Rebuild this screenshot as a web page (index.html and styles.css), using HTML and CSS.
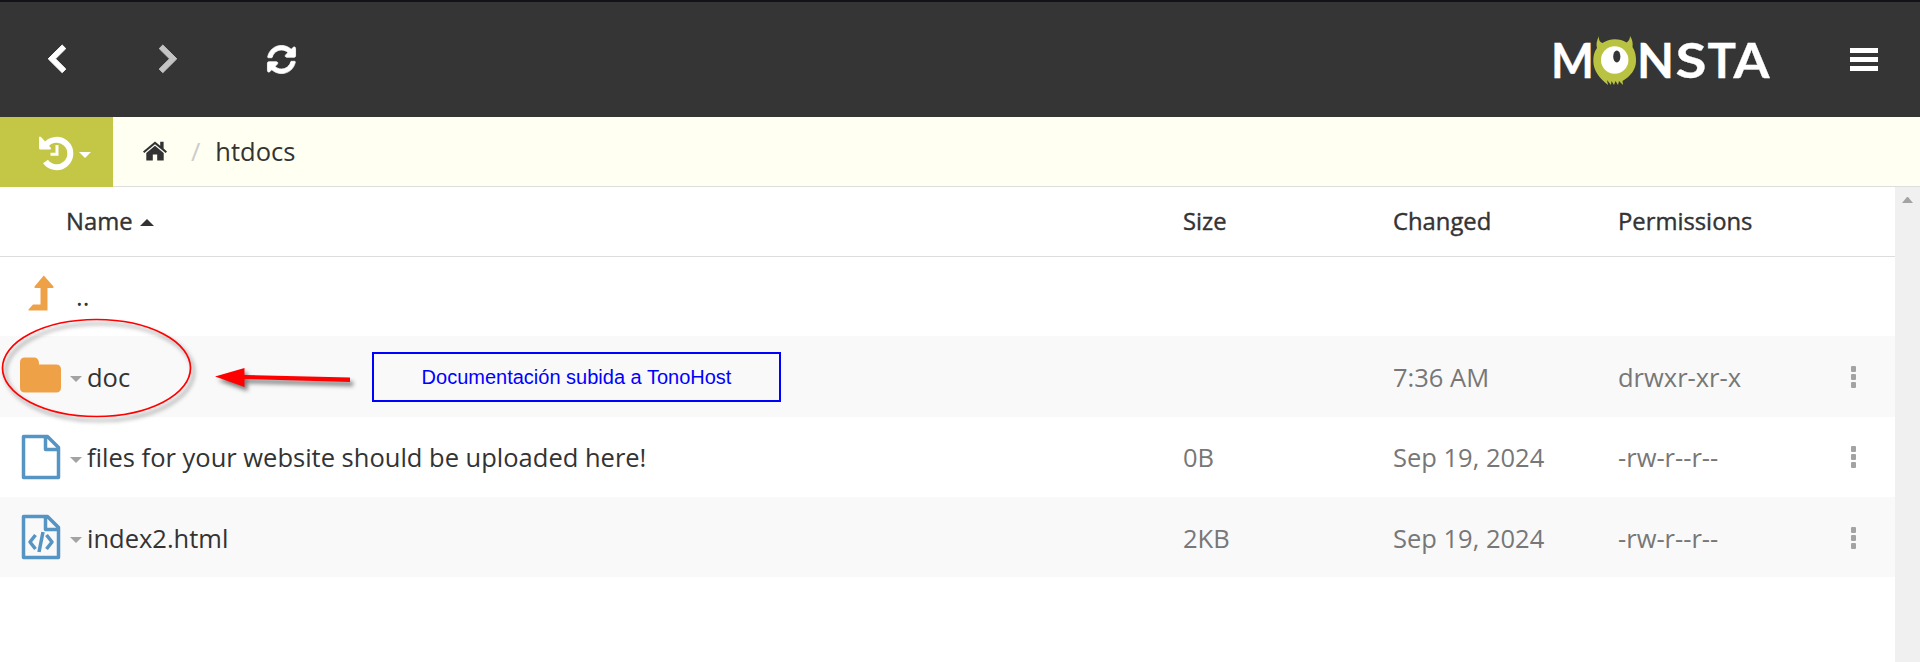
FILE: index.html
```html
<!DOCTYPE html>
<html lang="en">
<head>
<meta charset="utf-8">
<title>Monsta</title>
<link rel="stylesheet" href="styles.css">
</head>
<body>
<header class="topbar">
  <svg class="ic-back" viewBox="0 0 20 30"><path d="M15.2 1 18.8 4.6 8.500 14.8 18.8 25 15.2 28.7 1.2 14.8Z"/></svg>
  <svg class="ic-forward" viewBox="0 0 20 30"><path d="M4.8 1 1.2 4.6 11.5 14.8 1.2 25 4.8 28.7 18.8 14.8Z"/></svg>
  <svg class="ic-refresh" viewBox="0 0 512 512"><path d="M370.72 133.28C339.458 104.008 298.888 87.962 255.848 88c-77.458.068-144.328 53.178-162.791 126.85-1.344 5.363-6.122 9.15-11.651 9.15H24.103c-7.498 0-13.194-6.807-11.807-14.176C33.933 94.924 134.813 8 256 8c66.448 0 126.791 26.136 171.315 68.685L463.03 40.97C478.149 25.851 504 36.559 504 57.941V192c0 13.255-10.745 24-24 24H345.941c-21.382 0-32.09-25.851-16.971-40.971l41.75-41.749zM32 296h134.059c21.382 0 32.09 25.851 16.971 40.971l-41.75 41.75c31.262 29.273 71.835 45.319 114.876 45.28 77.418-.07 144.315-53.144 162.787-126.849 1.344-5.363 6.122-9.15 11.651-9.15h57.304c7.498 0 13.194 6.807 11.807 14.176C478.067 417.076 377.187 504 256 504c-66.448 0-126.791-26.136-171.315-68.685L48.97 471.03C33.851 486.149 8 475.441 8 454.059V320c0-13.255 10.745-24 24-24z"/></svg>
  <svg class="logo" viewBox="0 0 220 54">
    <g class="logo-text">
      <text x="-2" y="43" textLength="43" lengthAdjust="spacingAndGlyphs">M</text>
      <text x="84" y="43" textLength="37" lengthAdjust="spacingAndGlyphs">N</text>
      <text x="122.500" y="43" textLength="31" lengthAdjust="spacingAndGlyphs">S</text>
      <text x="154.500" y="43" textLength="28.500" lengthAdjust="spacingAndGlyphs">T</text>
      <text x="180.500" y="43" textLength="36" lengthAdjust="spacingAndGlyphs">A</text>
    </g>
    <path class="fur" d="M46 1C43.500 6 43 9 44 13C41 17 40.300 21 40.300 26C40.300 35 46 43 55 50L54 45L58 50L58.500 46L61 50L62.500 46L65 50L66 46L70 50L69.500 46C78 41 83 34 83 26C83 21 82.500 17 79.500 12C80 8 79.500 5 77 1C77 4 76 6 73.500 7.500C66.500 3 56.500 3 49.500 8C46.500 7 45.500 4 46 1Z"/>
    <circle class="eye" cx="61.700" cy="25" r="13.700"/>
    <ellipse class="pupil" cx="63.800" cy="21.500" rx="3.600" ry="6"/>
  </svg>
  <svg class="ic-menu" viewBox="0 0 28 24"><path d="M0 0h28v5H0zM0 9h28v5H0zM0 18h28v5H0z"/></svg>
</header>
<nav class="crumbs">
  <div class="history">
    <svg class="ic-history" viewBox="0 0 34 34"><path class="arc" d="M6.500 10.500A13.700 13.700 0 1 1 6.500 26.500"/><path class="head" d="M0 2.500Q.5 1 2 2L12 13Q12 14.500 11 14.500H1.500Q0 14.500 0 13Z"/><path class="hands" d="M18 10V19.300H11.500"/></svg>
    <i class="caret caret-white"></i>
  </div>
  <svg class="ic-home" viewBox="0 0 24 20"><path d="M12 .5 0 10.600 1.300 12 12 3.200 22.700 12 24 10.600 20.600 7.600V.8H17.200V4.800ZM12 4.800 3.300 12V19.500H9.800V13.500H14.200V19.500H20.700V12Z"/></svg>
  <span class="slash">/</span>
  <span class="folder">htdocs</span>
</nav>
<main class="pane">
  <section class="list">
    <div class="row head-row">
      <div class="cell title">Name<i class="sort"></i></div><div class="cell">Size</div><div class="cell">Changed</div><div class="cell">Permissions</div><div></div>
    </div>
    <div class="row up-row">
      <div class="cell entry"><span class="glyph"><svg class="ic-up" viewBox="0 0 26 36"><path d="M15.800.5 25.500 11.500Q26 13 24.500 13H19.500V35.500H1Q0 35.500.5 34.500L5 29.500H12.500V13H7.500Q6 13 6.500 11.500Z"/></svg></span><span class="dots">..</span></div>
    </div>
    <div class="row shaded tall">
      <div class="cell entry"><span class="glyph"><svg class="ic-folder" viewBox="0 0 41 36"><path d="M5 .5H14Q18.500.5 19 6V7.500H36Q41 7.500 41 12.500V30.500Q41 35.500 36 35.500H5Q0 35.500 0 30.500V5.500Q0 .5 5 .5Z"/></svg></span><i class="caret"></i><span>doc</span></div>
      <div class="cell"></div><div class="cell">7:36 AM</div><div class="cell">drwxr-xr-x</div><div class="more"><i></i><i></i><i></i></div>
    </div>
    <div class="row">
      <div class="cell entry"><span class="glyph"><svg class="ic-file" viewBox="0 0 38 44"><path d="M1.500 1.500H25.500L36.500 12.500V42.500H1.500ZM23.500 1.500V14.500H36.500"/></svg></span><i class="caret"></i><span>files for your website should be uploaded here!</span></div>
      <div class="cell">0B</div><div class="cell">Sep 19, 2024</div><div class="cell">-rw-r--r--</div><div class="more"><i></i><i></i><i></i></div>
    </div>
    <div class="row shaded">
      <div class="cell entry"><span class="glyph"><svg class="ic-file" viewBox="0 0 38 44"><path d="M1.500 1.500H25.500L36.500 12.500V42.500H1.500ZM23.500 1.500V14.500H36.500M13.500 20 8 27 13.500 34M24.500 20 30 27 24.500 34M21 17 17 37"/></svg></span><i class="caret"></i><span>index2.html</span></div>
      <div class="cell">2KB</div><div class="cell">Sep 19, 2024</div><div class="cell">-rw-r--r--</div><div class="more"><i></i><i></i><i></i></div>
    </div>
  </section>
  <div class="scrollbar"><i></i></div>
</main>
<svg class="marks" viewBox="0 0 380 120">
  <ellipse cx="96.500" cy="53" rx="94" ry="48.500"/>
  <path d="M215 61.500 244.500 53V60L350 62.500V67L244.500 64V72Z"/>
</svg>
<div class="note">Documentación subida a TonoHost</div>
</body>
</html>
```
FILE: styles.css
```css
* { box-sizing: border-box; }
body {
  margin: 0; height: 662px; overflow: hidden; position: relative;
  display: flex; flex-direction: column;
  background: #fff; color: #333;
  font: 25.500px/36px "Open Sans", sans-serif;
}
svg { display: block; flex: none; overflow: visible; }
.topbar {
  height: 117px; flex: none; display: flex; align-items: center;
  padding: 0 42px 2px 47px; background: #353535; border-top: 2px solid #111317; fill: #fff;
}
.ic-back, .ic-forward { width: 20px; height: 30px; stroke: #fff; stroke-width: 1; stroke-linejoin: round; }
.ic-forward { margin-left: 91px; fill: #c4c4c4; stroke: #c4c4c4; }
.ic-refresh { width: 29px; height: 29px; margin: 2px 0 0 89px; stroke: #fff; stroke-width: 14; }
.logo { width: 220px; height: 54px; margin: 7px 0 0 auto; }
.logo-text { font: 700 48px Lato, sans-serif; stroke: #fff; stroke-width: .3; }
.fur { fill: #bac341; }
.pupil { fill: #353535; }
.ic-menu { width: 28px; height: 24px; margin: 3px 0 0 77px; }
.crumbs {
  height: 70px; flex: none; display: flex; align-items: center;
  padding-bottom: 2px; background: #fffff2; border-bottom: 1px solid #ddd;
}
.history { width: 113px; height: 70px; margin-bottom: -1px; align-self: flex-start; padding: 0 22px 0 39px; background: #c3c745; display: flex; align-items: center; }
.ic-history { width: 34px; height: 34px; }
.arc, .hands { fill: none; stroke: #fff; stroke-width: 6; }
.hands { stroke-width: 3; }
.head { fill: #fff; }
.caret { border: 6px solid transparent; border-top-color: #a3a3a3; border-bottom: 0; flex: none; }
.caret-white { border-top-color: #fff; margin: 5px 0 0 6px; }
.ic-home { width: 24px; height: 20px; margin: 0 0 0 30px; fill: #333; }
.slash { color: #ccc; margin: 0 15px 0 24px; }
.pane { flex: 1; display: flex; }
.list { flex: 1; }
.row { height: 80px; display: grid; grid-template-columns: 1183px 210px 225px 225px 1fr; align-items: center; }
.head-row { height: 70px; padding-bottom: 2px; border-bottom: 1px solid #ddd; font-size: 23.800px; font-weight: 500; -webkit-text-stroke: .4px #333; }
.up-row { height: 79px; padding-bottom: 2px; }
.row.shaded { padding-top: 1px; background: #f9f9f9; }
.row.tall { height: 81px; padding-top: 0; }
.cell { color: #777; white-space: nowrap; }
.head-row .cell, .entry { color: #333; }
.title { padding-left: 66px; display: flex; align-items: center; }
.sort { border: 7px solid transparent; border-bottom-color: #333; border-top: 0; margin: 4px 0 0 7px; }
.entry { display: flex; align-items: center; }
.entry .caret { margin: 5px 5px 0 0; }
.glyph { width: 70px; padding-left: 20px; flex: none; }
.ic-up { width: 26px; height: 36px; margin: -5px 0 0 8px; fill: #efa148; }
.dots { margin-left: 6px; }
.ic-folder { width: 41px; height: 36px; margin-top: -4px; fill: #efa148; }
.ic-file { width: 38px; height: 44px; margin: -1px 0 0 2px; fill: none; stroke: #5694c4; stroke-width: 3.500; stroke-linejoin: round; }
.more { display: flex; flex-direction: column; gap: 2px; padding-left: 8px; }
.more i { width: 5px; height: 6px; background: #a3a3a3; border-radius: 1px; }
.scrollbar { width: 25px; background: #f0f0f0; padding: 10px 0 0 7px; }
.scrollbar i { display: block; width: 11px; border: 5.500px solid transparent; border-bottom: 6px solid #a3a3a3; border-top: 0; }
.marks { position: absolute; left: 0; top: 315px; width: 380px; height: 120px; filter: drop-shadow(3px 4px 2px rgba(0, 0, 0, .5)); fill: #f00; }
.marks ellipse { fill: none; stroke: #f00; stroke-width: 1.700; }
.note {
  position: absolute; left: 372px; top: 352px; width: 409px; height: 50px;
  border: 2px solid #00f; color: #00f; text-align: center;
  font: 20px/46px "Liberation Sans", sans-serif;
}
```
